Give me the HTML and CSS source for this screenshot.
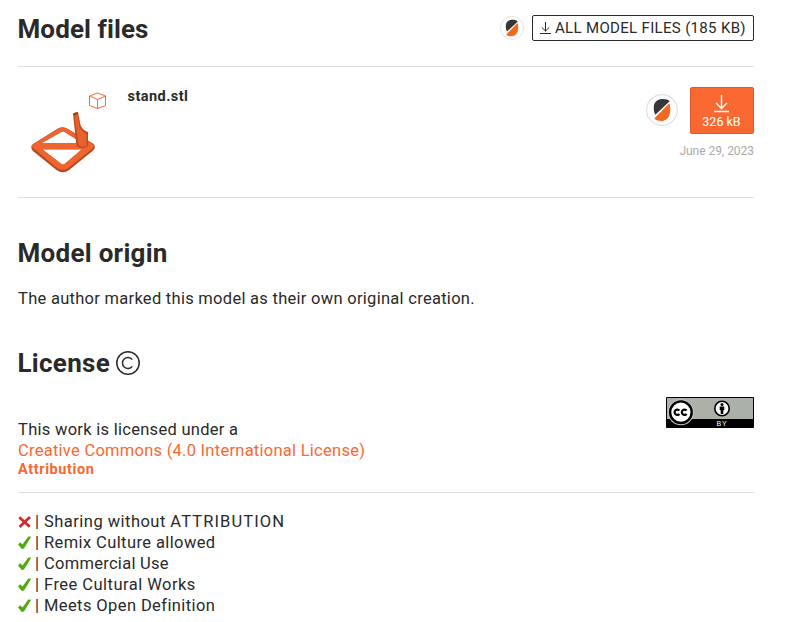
FILE: index.html
```
<!DOCTYPE html>
<html lang="en">
<head>
<meta charset="utf-8">
<title>Model files</title>
<link rel="stylesheet" href="styles.css">
</head>
<body>
<svg class="defs" width="0" height="0" aria-hidden="true">
  <symbol id="slicer" viewBox="0 0 32 32">
    <circle cx="16" cy="16" r="15.4" fill="#fff" stroke="#dedede" stroke-width="1.1"/>
    <path d="M9.300 20.800C7.600 18 7.300 13 8.300 10C10 6 13.500 5 17 5C20 5 22.300 5.800 23.700 7.300Z" fill="#363636"/>
    <path d="M23.300 9.300C24.500 12 24.700 17 23.800 20C22.500 24.500 19 27 15.500 27C12.500 27 10 26.500 8.300 24.600Z" fill="#f26a21"/>
  </symbol>
  <symbol id="check" viewBox="0 0 14 14">
    <path d="M0 8.500L2.200 6.300L4.500 8.500L10.300 .6L13.200 .8L6 12.600L3.800 13Z" fill="#51a910"/>
  </symbol>
</svg>
<main>
  <section>
    <header class="files-head">
      <h2>Model files</h2>
      <svg class="slicer-small"><use href="#slicer"/></svg>
      <a class="all-files"><svg width="11" height="13" viewBox="0 0 11 13"><path d="M5.500 0V9M1.800 5.400L5.500 9L9.200 5.400M0 11.500H11" fill="none" stroke="#2a2a2a"/></svg><span>ALL MODEL FILES (185 KB)</span></a>
    </header>
    <article class="file">
      <svg class="preview" width="82" height="90" viewBox="0 0 82 90">
        <path fill="#b8441c" fill-rule="evenodd" d="M15 56L40 40.500Q44.500 38 49 40.500L75 55.500Q79 59 74.500 63L51 82Q45 86.500 38.500 82L15 63Q11.500 59 15 56ZM24 55H64L45 43ZM24.500 61.500L45 77.500L64 61.500Z"/>
        <path fill="#ee6530" fill-rule="evenodd" d="M15.500 56L40 41Q44.500 38.500 49 41L74 55.500Q78 58 73.500 61.500L50.500 80Q45 84 39 80L16 61Q12 58 15.500 56ZM23.500 55H64L47 44Q45 42.800 43 44ZM24 61L43 75.500Q45 77 47 75.500L64 61Z"/>
        <path fill="#c24a1f" d="M55 25.500L60 24L62.500 37Q64 42 70 44V58Q65 62 58.500 58Z"/>
        <path fill="#e8622f" d="M56.500 27L59.500 26L61.500 39Q64 44 68.500 46V58Q64 60 60.500 57Z"/>
        <path fill="#a83d18" d="M55 26Q57 23.500 60 24.500L59.500 26.500L56 27.500Z"/>
        <path d="M71.500 8L79.500 5L87.500 8V17.500L79.500 20.500L71.500 17.500ZM71.500 8L79.500 11.500L87.500 8M79.500 11.500V20.500" fill="none" stroke="#fa6831" stroke-linejoin="round"/>
      </svg>
      <h3>stand.stl</h3>
      <div class="actions">
        <div class="buttons">
          <svg class="slicer-large"><use href="#slicer"/></svg>
          <a class="download"><svg width="15" height="18" viewBox="0 0 15 18"><path d="M7.500 0V13.500M2 8L7.500 13.500L13 8M0 16.500H15" fill="none" stroke="#fff" stroke-width="1.400"/></svg><span>326 kB</span></a>
        </div>
        <time>June 29, 2023</time>
      </div>
    </article>
  </section>
  <section class="origin">
    <h2>Model origin</h2>
    <p>The author marked this model as their own original creation.</p>
  </section>
  <section class="license">
    <h2><span>License</span><svg width="24" height="24" viewBox="0 0 24 24" fill="none" stroke="#2a2a2a" stroke-width="1.500"><circle cx="12" cy="12" r="11.200"/><path d="M16.300 8.600A5.500 5.500 0 1 0 16.300 15.400"/></svg></h2>
    <div class="terms">
      <div class="terms-text">
        <p class="under">This work is licensed under a</p>
        <a class="cc-link">Creative Commons (4.0 International License)</a>
        <strong>Attribution</strong>
      </div>
      <svg class="badge" width="88" height="31" viewBox="0 0 88 31">
        <rect width="88" height="31" rx="1"/>
        <path d="M1 1H87V22H1Z" fill="#abb1a8"/>
        <circle cx="14.900" cy="15.200" r="13" fill="#c4c8c2"/>
        <circle cx="14.900" cy="15.200" r="10.800" fill="#fff" stroke="#000" stroke-width="2.400"/>
        <path d="M13.400 13.500A2.700 2.700 0 1 0 13.400 17M20.600 13.500A2.700 2.700 0 1 0 20.600 17" fill="none" stroke="#000" stroke-width="2.200"/>
        <circle cx="56" cy="11.500" r="7.200" fill="#fff" stroke="#000" stroke-width="1.600"/>
        <circle cx="56" cy="7.400" r="1.500"/>
        <path d="M53.700 9.500H58.300V13.200H57.300V17H54.700V13.200H53.700Z"/>
        <text class="badge-text" x="50.500" y="29.300">BY</text>
      </svg>
    </div>
    <ul>
      <li><svg viewBox="0 0 14 14"><path d="M1.200 2.200L11.800 11.800M12 2L1.500 12" stroke="#d22b2e" stroke-width="2.800"/></svg><i>|</i><span class="wider">Sharing without <span class="caps">ATTRIBUTION</span></span></li>
      <li><svg><use href="#check"/></svg><i>|</i><span class="wide">Remix Culture allowed</span></li>
      <li><svg><use href="#check"/></svg><i>|</i><span>Commercial Use</span></li>
      <li><svg><use href="#check"/></svg><i>|</i><span class="wider">Free Cultural Works</span></li>
      <li><svg><use href="#check"/></svg><i>|</i><span class="wide">Meets Open Definition</span></li>
    </ul>
  </section>
</main>
</body>
</html>
```
FILE: styles.css
```
* { box-sizing: border-box; margin: 0; padding: 0; }
body { background: #fff; color: #2a2a2a; font: 16.5px/21px Roboto, sans-serif; letter-spacing: .28px; overflow: hidden; }
.defs { position: absolute; }
main { width: 736px; margin-left: 18px; }
svg { display: block; flex: none; overflow: visible; }
h2 { margin-left: -.5px; font-size: 26px; line-height: 32px; font-weight: 700; letter-spacing: .28px; }
.files-head { display: flex; align-items: flex-start; height: 67px; padding-top: 13px; border-bottom: 1px solid #dedede; }
.files-head h2 { letter-spacing: .1px; }
.slicer-small { width: 24px; height: 24px; margin: 3px 8px 0 auto; }
.all-files { display: flex; align-items: center; gap: 4px; width: 222px; height: 26px; margin-top: 2px; padding: 1px 0 0 7px; border: 1px solid #2a2a2a; border-radius: 2px; font-size: 15px; letter-spacing: .33px; white-space: nowrap; }
.file { display: flex; height: 131px; border-bottom: 1px solid #dedede; }
.preview { margin-top: 21px; }
h3 { margin: 20px 0 0 27.5px; font-size: 14.5px; line-height: 20px; letter-spacing: .45px; }
.actions { margin-left: auto; padding-top: 20px; text-align: right; }
.buttons { display: flex; gap: 12px; justify-content: flex-end; }
.slicer-large { width: 32px; height: 32px; margin-top: 7px; }
.download { display: flex; flex-direction: column; align-items: center; width: 64px; height: 47px; padding: 7px 1px 0 0; background: #fa6831; border: 1px solid #e0592a; border-radius: 2px; color: #fff; font-size: 12.5px; line-height: 18px; letter-spacing: 0; }
time { display: block; margin-top: 8px; color: #aaa; font-size: 12px; line-height: 18px; letter-spacing: -.03px; }
.origin { padding-top: 39px; }
.origin p { margin-top: 19px; }
.license { padding-top: 38px; }
.license h2 { display: flex; align-items: center; gap: 6.5px; }
.terms { display: flex; justify-content: space-between; height: 114px; border-bottom: 1px solid #dedede; }
.terms-text { padding-top: 40px; color: #fa6831; }
.under { color: #2a2a2a; }
.cc-link, strong { display: block; }
.cc-link { letter-spacing: .26px; }
strong { font-size: 14.5px; line-height: 17px; letter-spacing: .6px; }
.badge { margin-top: 18px; }
.badge-text { fill: #fff; font: 7px "Liberation Sans", sans-serif; letter-spacing: .8px; }
ul { padding-top: 18px; list-style: none; }
li { display: flex; align-items: center; height: 21px; white-space: nowrap; }
li svg { width: 14px; height: 14px; }
i { width: 12px; padding-left: 3px; font-style: normal; }
.wide { letter-spacing: .4px; }
.wider { letter-spacing: .47px; }
.caps { letter-spacing: 1.1px; }
```
